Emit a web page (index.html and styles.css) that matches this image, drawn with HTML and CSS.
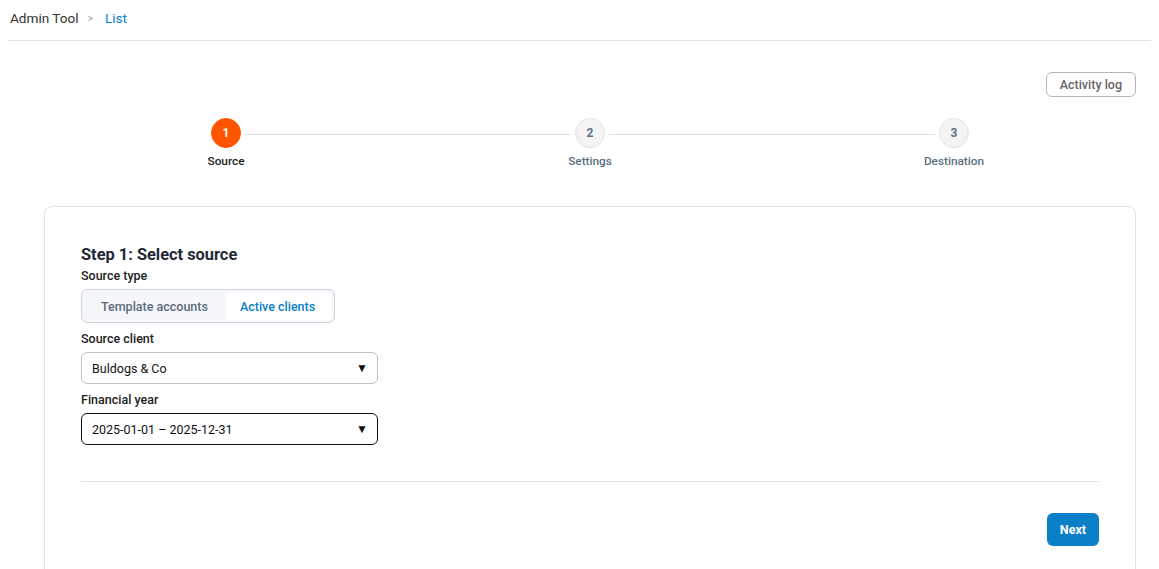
FILE: index.html
```html
<!DOCTYPE html>
<html lang="en">
<head>
    <meta charset="UTF-8">
    <meta name="viewport" content="width=device-width, initial-scale=1.0">
    <title>Admin Tool - List</title>
    <link rel="stylesheet" href="styles.css">
</head>
<body>
    <header class="breadcrumb">
        <span class="crumb">Admin Tool</span>
        <span class="crumb-sep">&gt;</span>
        <span class="crumb current">List</span>
    </header>

    <div class="page">
        <div class="toolbar">
            <button class="btn-outline" type="button">Activity log</button>
        </div>

        <ol class="stepper">
            <li class="step active">
                <span class="step-num">1</span>
                <span class="step-label">Source</span>
            </li>
            <li class="step">
                <span class="step-num">2</span>
                <span class="step-label">Settings</span>
            </li>
            <li class="step">
                <span class="step-num">3</span>
                <span class="step-label">Destination</span>
            </li>
        </ol>

        <section class="card">
            <h2 class="card-title">Step 1: Select source</h2>

            <label class="field-label">Source type</label>
            <div class="segmented">
                <button class="segment" type="button">Template accounts</button>
                <button class="segment selected" type="button">Active clients</button>
            </div>

            <label class="field-label">Source client</label>
            <div class="select">
                <span>Buldogs &amp; Co</span>
                <span class="arrow">&#9660;</span>
            </div>

            <label class="field-label">Financial year</label>
            <div class="select focused">
                <span>2025-01-01 &ndash; 2025-12-31</span>
                <span class="arrow">&#9660;</span>
            </div>

            <hr class="divider">

            <div class="actions">
                <button class="btn-primary" type="button">Next</button>
            </div>
        </section>
    </div>
</body>
</html>
```

FILE: styles.css
```css
body {
    font-family: Roboto, "Liberation Sans", Arial, sans-serif;
    margin: 8px;
    color: #222;
    background: #fff;
}

button {
    font-family: inherit;
    cursor: pointer;
}

/* breadcrumb bar */
.breadcrumb {
    display: flex;
    align-items: center;
    height: 20px;
    padding: 0 2px 12px;
    margin-right: -7px;
    border-bottom: 1px solid #e3e3e3;
    font-size: 13.6px;
}

.crumb {
    color: #333;
}

.crumb-sep {
    color: #999;
    font-size: 10px;
    margin: 0 12px 0 9px;
}

.crumb.current {
    color: #0a7fc8;
}

.page {
    padding: 0 15px 0 36px;
}

.toolbar {
    display: flex;
    justify-content: flex-end;
    margin-top: 31px;
}

.btn-outline {
    height: 25px;
    padding: 0 13px;
    border: 1px solid #b5b5b5;
    border-radius: 6px;
    background: #fff;
    color: #666;
    font-size: 12.5px;
    font-weight: 500;
}

/* stepper */
.stepper {
    display: flex;
    list-style: none;
    margin: 21px 0 0;
    padding: 0;
}

.step {
    flex: 1;
    position: relative;
    display: flex;
    flex-direction: column;
    align-items: center;
}

.step:not(:last-child)::after {
    content: "";
    position: absolute;
    top: 16px;
    left: calc(50% + 19px);
    width: calc(100% - 38px);
    height: 1px;
    background: #e2e2e2;
}

.step-num {
    display: flex;
    align-items: center;
    justify-content: center;
    width: 28px;
    height: 28px;
    border-radius: 50%;
    border: 1px solid #e3e3e3;
    background: #f4f4f5;
    color: #5b7083;
    font-size: 12px;
    font-weight: 700;
}

.step.active .step-num {
    border-color: #ff5500;
    background: #ff5500;
    color: #fff;
}

.step-label {
    margin-top: 6px;
    font-size: 11.8px;
    font-weight: 500;
    color: #5b7083;
}

.step.active .step-label {
    color: #222;
}

/* form card */
.card {
    margin-top: 38px;
    padding: 38px 36px 22px;
    border: 1px solid #e3e3e3;
    border-radius: 8px;
    min-height: 400px;
}

.card-title {
    margin: 0 0 4px;
    font-size: 16.4px;
    font-weight: 700;
    color: #1f2a37;
}

.field-label {
    display: block;
    margin-bottom: 6px;
    font-size: 12.5px;
    font-weight: 500;
    color: #222;
}

.segmented {
    display: inline-flex;
    gap: 4px;
    padding: 2px;
    margin-bottom: 8px;
    border: 1px solid #cdd3db;
    border-radius: 6px;
    background: #f5f7fa;
}

.segment {
    height: 28px;
    padding: 0 14px 0 17px;
    border: none;
    border-radius: 4px;
    background: transparent;
    color: #5b6b7c;
    font-size: 12.5px;
    font-weight: 500;
}

.segment.selected {
    background: #fff;
    color: #0a7fc8;
    padding: 0 17px 0 14px;
}

.select {
    display: flex;
    align-items: center;
    justify-content: space-between;
    box-sizing: border-box;
    width: 297px;
    height: 32px;
    padding: 0 9px 0 10px;
    margin-bottom: 8px;
    border: 1px solid #c4c4c4;
    border-radius: 6px;
    font-size: 12.5px;
    color: #111;
}

.select.focused {
    border-color: #111;
}

.select .arrow {
    font-size: 12px;
}

.divider {
    margin: 36px 0 0;
    border: none;
    border-top: 1px solid #e3e3e3;
}

.actions {
    display: flex;
    justify-content: flex-end;
    margin-top: 31px;
}

.btn-primary {
    height: 33px;
    padding: 0 13px;
    border: none;
    border-radius: 6px;
    background: #0a7fc8;
    color: #fff;
    font-size: 12.5px;
    font-weight: 700;
}
```
